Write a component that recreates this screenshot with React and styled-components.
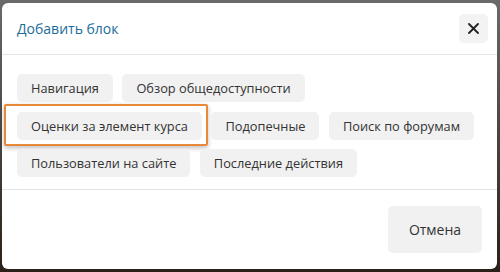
import React from "react";
import styled, { createGlobalStyle } from "styled-components";

const Global = createGlobalStyle`
  html, body { margin: 0; padding: 0; }
  body {
    width: 500px;
    height: 272px;
    overflow: hidden;
    background: linear-gradient(180deg, #6a6a6a 0%, #4a4440 50%, #2a2019 100%);
    font-family: "Open Sans", "Noto Sans", sans-serif;
  }
`;

const Modal = styled.div`
  box-sizing: border-box;
  margin: 3px 3px 0 2px;
  width: 495px;
  height: 266px;
  background: #fff;
  border-radius: 6px;
  display: flex;
  flex-direction: column;
  overflow: hidden;
`;

const Header = styled.div`
  box-sizing: border-box;
  flex-shrink: 0;
  height: 52px;
  padding: 0 9px 0 15px;
  display: flex;
  align-items: center;
  justify-content: space-between;
  border-bottom: 1px solid #e3e3e3;
`;

const Title = styled.h5`
  margin: 0;
  font-size: 14px;
  font-weight: 400;
  color: #1b6c99;
`;

const CloseButton = styled.button`
  width: 29px;
  height: 29px;
  border: none;
  border-radius: 5px;
  background: #f3f3f3;
  display: flex;
  align-items: center;
  justify-content: center;
  padding: 0;
  margin-bottom: 1px;
`;

const Body = styled.div`
  flex-shrink: 0;
  padding: 19px 15px 12px;
  border-bottom: 1px solid #e3e3e3;
`;

const BlockList = styled.div`
  display: flex;
  flex-wrap: wrap;
  row-gap: 9.5px;
  column-gap: 9.5px;
`;

const BlockButton = styled.button`
  position: relative;
  box-sizing: border-box;
  height: 28px;
  padding: 0 14px;
  border: none;
  border-radius: 5px;
  background: #f1f1f1;
  color: #333;
  font-family: inherit;
  font-size: 12.8px;
  white-space: nowrap;
`;

const FocusRing = styled.span`
  position: absolute;
  left: -13px;
  top: -8px;
  right: -6px;
  bottom: -6px;
  border: 2px solid #e8893a;
  border-radius: 2px;
  box-shadow: 0 2px 5px rgba(0, 0, 0, 0.25);
  pointer-events: none;
`;

const Footer = styled.div`
  flex: 1;
  display: flex;
  justify-content: flex-end;
  align-items: flex-start;
  padding: 16px 15px 0;
`;

const CancelButton = styled.button`
  box-sizing: border-box;
  width: 94px;
  height: 47px;
  border: none;
  border-radius: 5px;
  background: #f1f1f1;
  color: #333;
  font-family: inherit;
  font-size: 14px;
`;

const blocks = [
  { label: "Навигация" },
  { label: "Обзор общедоступности" },
  { label: "Оценки за элемент курса", focused: true },
  { label: "Подопечные" },
  { label: "Поиск по форумам" },
  { label: "Пользователи на сайте" },
  { label: "Последние действия" },
];

export default function App() {
  return (
    <>
      <Global />
      <Modal>
        <Header>
          <Title>Добавить блок</Title>
          <CloseButton aria-label="Закрыть">
            <svg width="11" height="11" viewBox="0 0 11 11">
              <path d="M1 1L10 10M10 1L1 10" stroke="#222" strokeWidth="1.8" strokeLinecap="round" />
            </svg>
          </CloseButton>
        </Header>
        <Body>
          <BlockList>
            {blocks.map((b) => (
              <BlockButton key={b.label}>
                {b.label}
                {b.focused && <FocusRing />}
              </BlockButton>
            ))}
          </BlockList>
        </Body>
        <Footer>
          <CancelButton>Отмена</CancelButton>
        </Footer>
      </Modal>
    </>
  );
}
